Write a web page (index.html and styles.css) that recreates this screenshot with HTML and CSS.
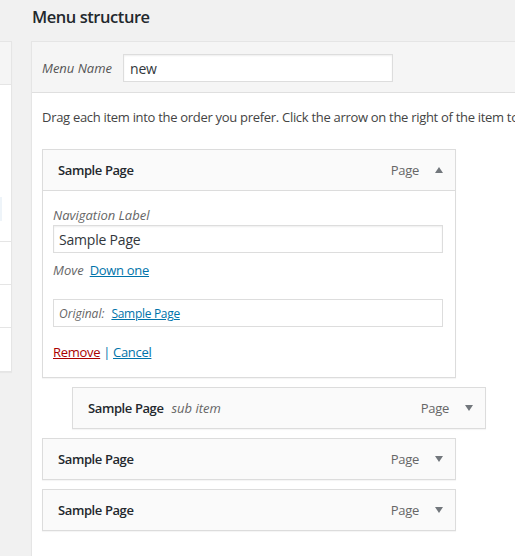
FILE: index.html
```html
<!DOCTYPE html>
<html lang="en">
<head>
<meta charset="utf-8">
<title>Menu structure</title>
<link rel="stylesheet" href="styles.css">
</head>
<body>
<div class="page">
  <aside class="side">
    <div class="side-head"></div>
    <div class="side-body"><div class="side-focus"></div></div>
    <div class="side-row"></div>
    <div class="side-row"></div>
    <div class="side-row"></div>
  </aside>
  <main class="main">
    <h2 class="title">Menu structure</h2>
    <div class="panel">
      <div class="panel-head">
        <label class="name-label" for="menu-name">Menu Name</label>
        <input class="name-input" id="menu-name" type="text" value="new">
      </div>
      <div class="panel-body">
        <p class="hint">Drag each item into the order you prefer. Click the arrow on the right of the item to reveal additional configuration options.</p>
        <ul class="menu">
          <li class="item">
            <div class="item-bar">
              <span class="item-title">Sample Page</span>
              <span class="item-type">Page</span>
              <span class="arrow up"></span>
            </div>
            <div class="item-settings">
              <label class="field-label" for="nav-label">Navigation Label</label>
              <input class="field-input" id="nav-label" type="text" value="Sample Page">
              <div class="move"><span class="move-label">Move</span><a class="link" href="#">Down one</a></div>
              <div class="original"><span class="original-label">Original:</span><a class="link" href="#">Sample Page</a></div>
              <div class="actions"><a class="remove" href="#">Remove</a><span class="sep">|</span><a class="link" href="#">Cancel</a></div>
            </div>
          </li>
          <li class="item sub">
            <div class="item-bar">
              <span class="item-title">Sample Page <span class="sub-note">sub item</span></span>
              <span class="item-type">Page</span>
              <span class="arrow"></span>
            </div>
          </li>
          <li class="item">
            <div class="item-bar">
              <span class="item-title">Sample Page</span>
              <span class="item-type">Page</span>
              <span class="arrow"></span>
            </div>
          </li>
          <li class="item">
            <div class="item-bar">
              <span class="item-title">Sample Page</span>
              <span class="item-type">Page</span>
              <span class="arrow"></span>
            </div>
          </li>
        </ul>
      </div>
    </div>
  </main>
</div>
</body>
</html>
```
FILE: styles.css
```css
html, body {
  margin: 0;
  padding: 0;
}
body {
  background: #f1f1f1;
  font-family: "Open Sans", "Noto Sans", "Liberation Sans", sans-serif;
  font-size: 13px;
  line-height: 19px;
  letter-spacing: -0.3px;
  color: #23282d;
  overflow: hidden;
  width: 515px;
  height: 556px;
}
.page {
  display: flex;
  align-items: flex-start;
}
.side {
  flex: none;
  width: 11px;
  margin-top: 41px;
  background: #fff;
  border: 1px solid #e5e5e5;
  border-left: none;
  box-shadow: 0 1px 1px rgba(0,0,0,.04);
}
.side-head {
  height: 42px;
  background: #f5f5f5;
  border-bottom: 1px solid #e5e5e5;
}
.side-body {
  height: 157px;
  border-bottom: 1px solid #e5e5e5;
  box-sizing: border-box;
  padding-top: 112px;
}
.side-focus {
  width: 2px;
  height: 24px;
  background: #eef4f9;
}
.side-row {
  height: 43px;
  box-sizing: border-box;
  border-bottom: 1px solid #e5e5e5;
}
.side-row:last-child {
  border-bottom: none;
}
.main {
  flex: none;
  margin-left: 19px;
  width: 620px;
}
.title {
  margin: 0;
  height: 41px;
  box-sizing: border-box;
  padding: 6px 0 0 1px;
  font-size: 16.5px;
  line-height: 22px;
  letter-spacing: -0.45px;
  font-weight: 600;
  color: #23282d;
}
.panel {
  background: #fff;
  border: 1px solid #e5e5e5;
  box-shadow: 0 1px 1px rgba(0,0,0,.04);
  min-height: 540px;
}
.panel-head {
  display: flex;
  align-items: center;
  background: #f5f5f5;
  border-bottom: 1px solid #dfdfdf;
  padding: 12px 10px 10px;
}
.name-label {
  width: 81px;
  flex: none;
  font-style: italic;
  letter-spacing: 0;
  color: #555;
  padding-top: 1px;
}
.name-input {
  box-sizing: border-box;
  width: 270px;
  height: 28px;
  margin: 0;
  padding: 1px 6px 0;
  border: 1px solid #ddd;
  box-shadow: inset 0 1px 2px rgba(0,0,0,.07);
  font-family: inherit;
  font-size: 14px;
  letter-spacing: -0.2px;
  color: #32373c;
  background: #fff;
}
.panel-body {
  padding: 15px 10px 0;
}
.hint {
  margin: 0 0 22px;
  white-space: nowrap;
  color: #444;
}
.menu {
  list-style: none;
  margin: 0;
  padding: 0;
}
.item {
  width: 414px;
  margin-bottom: 9px;
}
.item.sub {
  margin-left: 30px;
}
.item-bar {
  box-sizing: border-box;
  height: 42px;
  display: flex;
  align-items: center;
  padding: 1px 12px 0 15px;
  background: #fafafa;
  border: 1px solid #dcdcdc;
  box-shadow: 0 1px 1px rgba(0,0,0,.04);
}
.item-title {
  flex: 1;
  font-weight: 600;
  letter-spacing: -0.4px;
  color: #23282d;
}
.sub-note {
  font-weight: 400;
  font-style: italic;
  letter-spacing: 0;
  color: #666;
  margin-left: 5px;
}
.item-type {
  color: #666;
  margin-right: 16px;
}
.arrow {
  width: 0;
  height: 0;
  margin-top: -1px;
  border-left: 4px solid transparent;
  border-right: 4px solid transparent;
  border-top: 6px solid #72777c;
}
.arrow.up {
  border-top: none;
  border-bottom: 6px solid #72777c;
}
.item-settings {
  box-sizing: border-box;
  height: 187px;
  padding: 15px 10px 0;
  background: #fff;
  border: 1px solid #dcdcdc;
  border-top: none;
  box-shadow: 0 1px 1px rgba(0,0,0,.04);
}
.field-label {
  display: block;
  font-style: italic;
  letter-spacing: 0;
  color: #666;
}
.field-input {
  display: block;
  box-sizing: border-box;
  width: 390px;
  height: 28px;
  margin: 0;
  padding: 1px 5px 0;
  border: 1px solid #ddd;
  box-shadow: inset 0 1px 2px rgba(0,0,0,.07);
  font-family: inherit;
  font-size: 14px;
  letter-spacing: -0.2px;
  color: #32373c;
  background: #fff;
}
.move {
  margin-top: 8px;
}
.move-label {
  font-style: italic;
  letter-spacing: 0;
  color: #666;
  margin-right: 6px;
}
.link {
  color: #0073aa;
  text-decoration: underline;
}
.original {
  box-sizing: border-box;
  width: 390px;
  height: 28px;
  margin-top: 19px;
  display: flex;
  align-items: center;
  padding: 1px 5px 0;
  border: 1px solid #ddd;
  font-size: 12px;
}
.original-label {
  font-style: italic;
  letter-spacing: 0;
  color: #666;
  margin-right: 7px;
}
.actions {
  margin-top: 16px;
}
.remove {
  color: #a00;
  text-decoration: underline;
}
.sep {
  color: #0073aa;
  margin: 0 3px;
}
```
